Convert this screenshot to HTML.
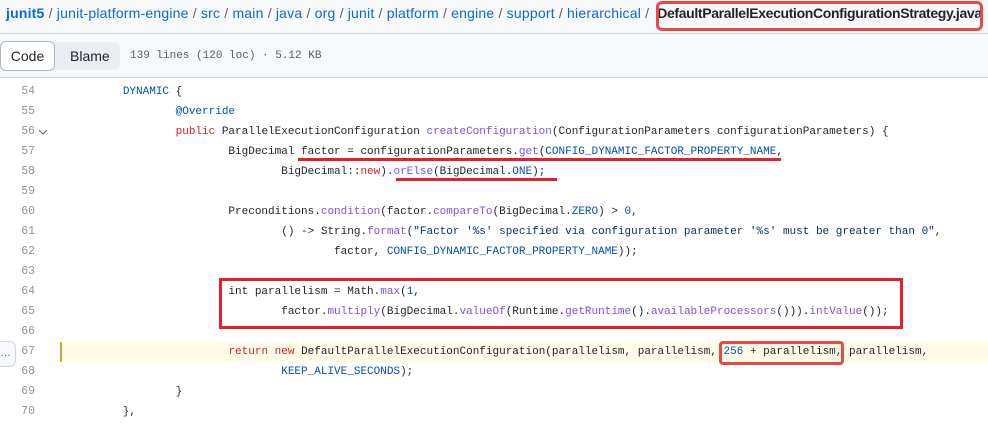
<!DOCTYPE html>
<html><head><meta charset="utf-8"><style>
*{margin:0;padding:0;box-sizing:border-box}
body{width:988px;height:424px;overflow:hidden;background:#fff;position:relative;font-family:"Liberation Sans",sans-serif;}
.hdr{position:absolute;left:0;top:0;width:988px;height:78px;background:#f6f8fa;border-bottom:1px solid #d0d7de}
.sep{position:absolute;left:0;top:33px;width:988px;height:1px;background:#d0d7de}
.bc{position:absolute;left:6px;top:5px;font-size:14px;color:#0969da;white-space:nowrap;letter-spacing:0.2px}
.bc b{font-weight:bold}
.bc .s{color:#57606a}
.bc .f{color:#1f2328;font-weight:bold;letter-spacing:-0.35px;margin-left:8px}
.seg{position:absolute;left:0;top:42px;width:120px;height:28px;background:#eaeef2;border-radius:6px}
.code{position:absolute;left:0;top:41px;width:55px;height:30px;background:#fff;border:1px solid #afb8c1;border-radius:6px;font-size:14px;text-align:center;line-height:28px;color:#1f2328}
.blame{position:absolute;left:70px;top:41px;font-size:14px;line-height:30px;color:#1f2328}
.meta{position:absolute;left:130px;top:41px;line-height:30px;font-family:"Liberation Mono",monospace;font-size:11px;color:#57606a}
.ln{position:absolute;left:0;width:35px;text-align:right;font-family:"Liberation Mono",monospace;font-size:11.5px;color:#8c959f;line-height:20px}
.cl{position:absolute;left:70px;font-family:"Liberation Mono",monospace;font-size:11px;color:#1f2328;line-height:20px;white-space:pre}
.k{color:#cf222e}.m{color:#8250df}.c{color:#0550ae}.s2{color:#0a3069}
.hl{position:absolute;left:60px;top:342px;width:928px;height:20px;background:#fffbe6;border-left:2px solid #d4a72c}
.box{position:absolute;border:3px solid #e5202a}
</style></head><body>
<div class="hdr"></div><div class="sep"></div>
<div class="bc"><b>junit5</b> <span class="s">/</span> junit-platform-engine <span class="s">/</span> src <span class="s">/</span> main <span class="s">/</span> java <span class="s">/</span> org <span class="s">/</span> junit <span class="s">/</span> platform <span class="s">/</span> engine <span class="s">/</span> support <span class="s">/</span> hierarchical <span class="s">/</span><span class="f">DefaultParallelExecutionConfigurationStrategy.java</span></div>
<div class="box" style="left:656px;top:1px;width:327px;height:30px;border-radius:6px;border-color:#e84848"></div>
<div class="seg"></div><div class="code">Code</div><div class="blame">Blame</div>
<div class="meta">139 lines (120 loc) · 5.12 KB</div>
<div class="hl"></div>
<div style="position:absolute;left:-6px;top:341px;width:22px;height:26px;border:1px solid #d0d7de;border-radius:6px;background:#f6f8fa;font-size:11px;line-height:22px;text-align:right;padding-right:4px;color:#57606a">…</div>

<div class="ln" style="top:82px">54</div>
<div class="ln" style="top:102px">55</div>
<div class="ln" style="top:122px">56</div>
<svg style="position:absolute;left:38px;top:128px" width="10" height="8"><path d="M1 2 L5 6 L9 2" fill="none" stroke="#6e7781" stroke-width="1.2"/></svg>
<div class="ln" style="top:142px">57</div>
<div class="ln" style="top:162px">58</div>
<div class="ln" style="top:182px">59</div>
<div class="ln" style="top:202px">60</div>
<div class="ln" style="top:222px">61</div>
<div class="ln" style="top:242px">62</div>
<div class="ln" style="top:262px">63</div>
<div class="ln" style="top:282px">64</div>
<div class="ln" style="top:302px">65</div>
<div class="ln" style="top:322px">66</div>
<div class="ln" style="top:342px">67</div>
<div class="ln" style="top:362px">68</div>
<div class="ln" style="top:382px">69</div>
<div class="ln" style="top:402px">70</div>

<div class="cl" style="top:82px">        <span class="c">DYNAMIC</span> {</div>
<div class="cl" style="top:102px">                <span class="c">@Override</span></div>
<div class="cl" style="top:122px">                <span class="k">public</span> ParallelExecutionConfiguration <span class="m">createConfiguration</span>(ConfigurationParameters configurationParameters) {</div>
<div class="cl" style="top:142px">                        BigDecimal factor = configurationParameters.<span class="m">get</span>(<span class="c">CONFIG_DYNAMIC_FACTOR_PROPERTY_NAME</span>,</div>
<div class="cl" style="top:162px">                                BigDecimal::<span class="k">new</span>).<span class="m">orElse</span>(BigDecimal.<span class="c">ONE</span>);</div>
<div class="cl" style="top:202px">                        Preconditions.<span class="m">condition</span>(factor.<span class="m">compareTo</span>(BigDecimal.<span class="c">ZERO</span>) &gt; <span class="c">0</span>,</div>
<div class="cl" style="top:222px">                                () -&gt; String.<span class="m">format</span>(<span class="s2">"Factor '%s' specified via configuration parameter '%s' must be greater than 0"</span>,</div>
<div class="cl" style="top:242px">                                        factor, <span class="c">CONFIG_DYNAMIC_FACTOR_PROPERTY_NAME</span>));</div>
<div class="cl" style="top:282px">                        int parallelism = Math.<span class="m">max</span>(<span class="c">1</span>,</div>
<div class="cl" style="top:302px">                                factor.<span class="m">multiply</span>(BigDecimal.<span class="m">valueOf</span>(Runtime.<span class="m">getRuntime</span>().<span class="m">availableProcessors</span>())).<span class="m">intValue</span>());</div>
<div class="cl" style="top:342px">                        <span class="k">return</span> <span class="k">new</span> DefaultParallelExecutionConfiguration(parallelism, parallelism, <span class="c">256</span> + parallelism, parallelism,</div>
<div class="cl" style="top:362px">                                <span class="c">KEEP_ALIVE_SECONDS</span>);</div>
<div class="cl" style="top:382px">                }</div>
<div class="cl" style="top:402px">        },</div>

<div style="position:absolute;left:298px;top:158px;width:483px;height:3px;background:#e5202a"></div>
<div style="position:absolute;left:396px;top:178px;width:161px;height:3px;background:#e5202a"></div>
<div class="box" style="left:219px;top:278px;width:684px;height:51px"></div>
<div class="box" style="left:719px;top:341px;width:125px;height:24px;border-radius:4px;border-color:#e84848"></div>
</body></html>
